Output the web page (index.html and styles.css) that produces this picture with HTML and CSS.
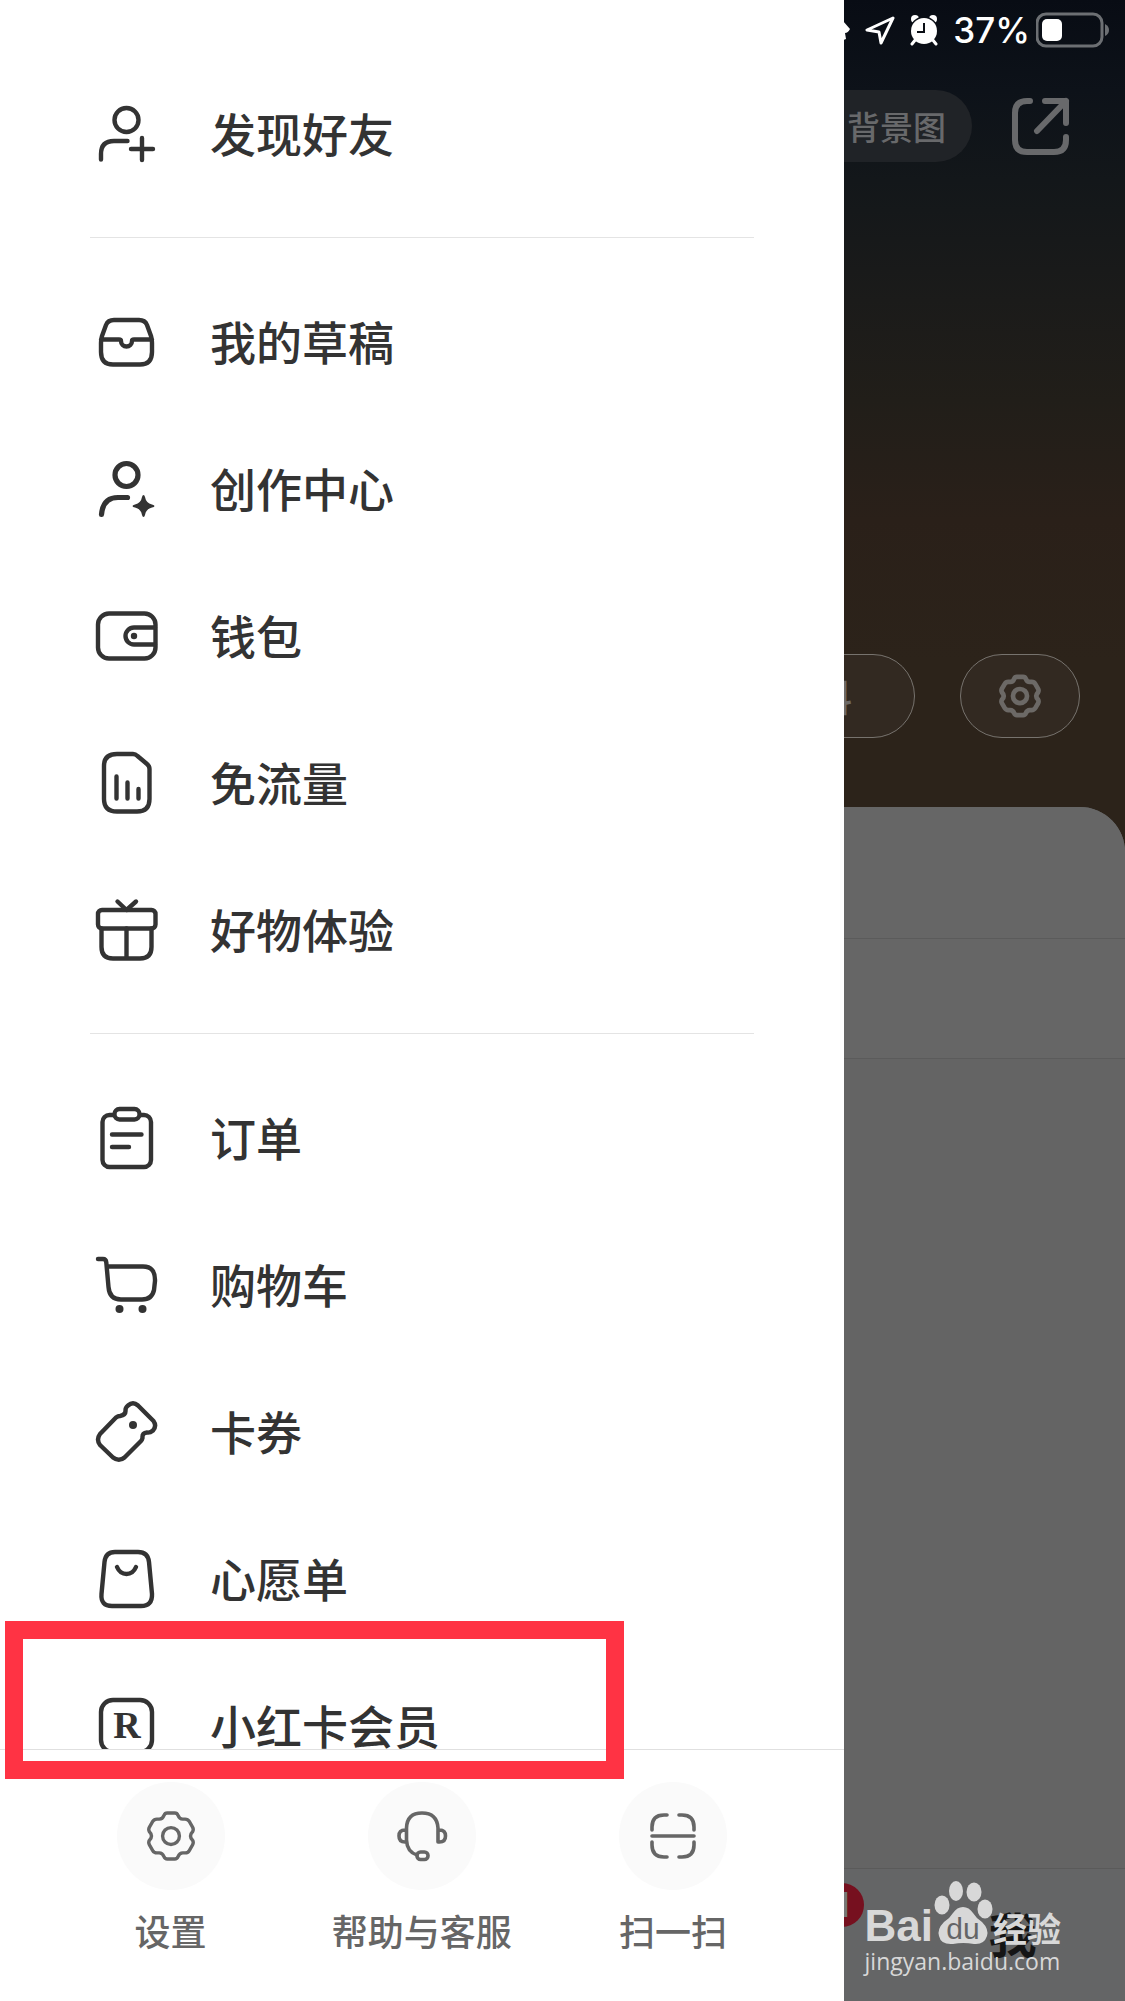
FILE: index.html
```html
<!DOCTYPE html>
<html lang="zh-CN">
<head>
    <meta charset="UTF-8">
    <meta name="viewport" content="width=device-width, initial-scale=1.0">
    <title>我</title>
    <link rel="stylesheet" href="styles.css">
</head>
<body>
    <svg class="defs" width="0" height="0" aria-hidden="true">
        <symbol id="gear" viewBox="-32 -32 64 64">
            <path d="M-4-24.5H4Q6.5-24.5 7.5-22Q9-18 12.5-18H15Q18-18 19.5-15.5L23-9.5Q24.5-7 23-4.5Q18.500 0 23 4.5Q24.5 7 23 9.5L19.5 15.5Q18 18 15 18H12.5Q9 18 7.5 22Q6.5 24.5 4 24.5H-4Q-6.5 24.5-7.5 22Q-9 18-12.5 18H-15Q-18 18-19.5 15.5L-23 9.5Q-24.5 7-23 4.5Q-18.500 0-23-4.5Q-24.5-7-23-9.5L-19.5-15.5Q-18-18-15-18H-12.5Q-9-18-7.5-22Q-6.5-24.5-4-24.5Z"/>
            <circle r="9"/>
        </symbol>
    </svg>

    <!-- 个人主页（被遮罩压暗） -->
    <main class="page">
        <section class="hero">
            <div class="status-bar">
                <svg width="17" height="22" viewBox="0 0 17 22" fill="#fff"><path d="M10 2L17 10Q15 14 12 14L13 20L8 22V2Z"/></svg>
                <svg width="30" height="30" viewBox="0 0 30 30" fill="none" stroke="#fff" stroke-width="3" stroke-linejoin="round"><path d="M28 3L2 15L14 17L16 28Z"/></svg>
                <svg width="28" height="32" viewBox="0 0 28 32">
                    <circle cx="5" cy="5" r="4" fill="#fff"/>
                    <circle cx="23" cy="5" r="4" fill="#fff"/>
                    <circle cx="14" cy="17" r="14.5" fill="#0a0e15"/>
                    <path d="M6 25L2 30M22 25L26 30" stroke="#fff" stroke-width="3" stroke-linecap="round"/>
                    <circle cx="14" cy="17" r="13" fill="#fff"/>
                    <path d="M14 9V18H7" fill="none" stroke="#0a0e15" stroke-width="2"/>
                </svg>
                <span class="battery">
                    37%
                    <svg width="74" height="36" viewBox="0 0 74 36">
                        <rect x="1" y="2" width="65" height="32" rx="9" fill="none" stroke="#6c6f73" stroke-width="3"/>
                        <rect x="6" y="7" width="20" height="22" rx="5" fill="#fff"/>
                        <path d="M69 12Q73 14 73 18Q73 22 69 24Z" fill="#6c6f73"/>
                    </svg>
                </span>
            </div>
            <div class="nav-bar">
                <button class="bg-button">背景图</button>
                <button class="share-button" aria-label="分享">
                    <svg width="60" height="60" viewBox="0 0 60 60"><path d="M20 5H17Q5 5 5 17V44Q5 56 17 56H44Q56 56 56 44V41M35 5H56V27M56 5L27 35"/></svg>
                </button>
            </div>
            <div class="actions">
                <button class="pill">编辑资料</button>
                <button class="pill pill-icon" aria-label="设置"><svg width="50" height="50"><use href="#gear"/></svg></button>
            </div>
        </section>
        <section class="panel">
            <div class="panel-tabs"></div>
            <div class="panel-filter"></div>
        </section>
        <footer class="tab-bar">
            <a class="tab tab-message" href="#" aria-label="消息"><span class="badge">1</span></a>
            <a class="tab tab-me" href="#">我</a>
        </footer>
    </main>

    <!-- 侧边菜单 -->
    <aside class="drawer">
        <nav class="menu">
            <div class="menu-group">
                <a class="menu-item" href="#">
                    <svg class="icon" viewBox="0 0 64 64"><circle cx="32.5" cy="18" r="12"/><path d="M7 57.5V52Q7 39 20 39H33.5M48 36V58M37 47H59"/></svg>
                    <span class="menu-label">发现好友</span>
                </a>
            </div>
            <div class="menu-group">
                <a class="menu-item" href="#">
                    <svg class="icon" viewBox="0 0 64 64"><path d="M20 10H45Q51 10 53 15L57 26Q58 29 58 33V42Q58 54.500 46 54.500H19Q7 54.500 7 42V33Q7 29 8 26L12 15Q14 10 20 10ZM7 29.500H25Q27 29.500 27 31A5.500 5.500 0 0 0 38 31Q38 29.500 40 29.500H58"/></svg>
                    <span class="menu-label">我的草稿</span>
                </a>
                <a class="menu-item" href="#">
                    <svg class="icon icon-bold" viewBox="0 0 64 64"><circle cx="32.500" cy="18" r="11.500"/><path d="M7.500 57.500Q9 40.500 24 40.500H33.500"/><path class="solid" d="M49.500 38Q50.500 38 51 40Q52 46 58 47.500Q60.500 48 60.500 49Q60.500 50 58 50.500Q52 52 51 58Q50.500 60 49.500 60Q48.500 60 48 58Q47 52 41 50.500Q38.500 50 38.500 49Q38.500 48 41 47.500Q47 46 48 40Q48.500 38 49.500 38Z"/></svg>
                    <span class="menu-label">创作中心</span>
                </a>
                <a class="menu-item" href="#">
                    <svg class="icon" viewBox="0 0 64 64"><rect x="4" y="9.500" width="57.500" height="45" rx="11"/><path d="M61 23.500H40A8.500 8.500 0 0 0 40 40.500H61"/><circle class="solid" cx="40" cy="32" r="3.200"/></svg>
                    <span class="menu-label">钱包</span>
                </a>
                <a class="menu-item" href="#">
                    <svg class="icon" viewBox="0 0 64 64"><path d="M23 3H39Q41.500 3 43.500 5L53 13Q55.500 15 55.500 18V48Q55.500 60.500 43 60.500H23Q10 60.500 10 48V15Q10 3 23 3ZM22.500 25.500V47.500M33.500 31.500V47.500M44.500 38V47.500"/></svg>
                    <span class="menu-label">免流量</span>
                </a>
                <a class="menu-item" href="#">
                    <svg class="icon" viewBox="0 0 64 64"><rect x="4" y="12" width="57.500" height="18.500" rx="4"/><path d="M7.500 30.500V49Q7.500 60.500 19 60.500H46Q57.500 60.500 57.500 49V30.500M32.500 30.500V60.500M23.500 3.500L32.500 12L42 3.500"/></svg>
                    <span class="menu-label">好物体验</span>
                </a>
            </div>
            <div class="menu-group">
                <a class="menu-item" href="#">
                    <svg class="icon" viewBox="0 0 64 64"><rect x="8.500" y="9" width="48.500" height="52" rx="7"/><rect class="paper" x="20.500" y="3" width="25" height="10.500" rx="5"/><path d="M18 28.500H47.500M18 41H35"/></svg>
                    <span class="menu-label">订单</span>
                </a>
                <a class="menu-item" href="#">
                    <svg class="icon" viewBox="0 0 64 64"><path d="M4 6H9Q12 6 12.300 9.500L14.500 34Q15.500 46.500 27 46.500H48Q58 46.500 60 37L61 28Q61.500 13.500 49 13.500H13"/><circle class="solid" cx="25.500" cy="56" r="4"/><circle class="solid" cx="48.500" cy="56" r="4"/></svg>
                    <span class="menu-label">购物车</span>
                </a>
                <a class="menu-item" href="#">
                    <svg class="icon" viewBox="0 0 64 64"><path d="M34 5.500Q39 1 44 5.500L59.500 21Q63 26 59 30.500Q56 33 53 32.500Q48 33 48.500 38Q48 40 47 41L30.500 57.500Q25 62 19 57.500L6 45Q2 39.500 6 34L22 17.500Q24 16 26 16Q32 15 31.500 10Q31.500 7.500 34 5.500Z"/><circle class="solid" cx="39" cy="25" r="4"/></svg>
                    <span class="menu-label">卡券</span>
                </a>
                <a class="menu-item" href="#">
                    <svg class="icon" viewBox="0 0 64 64"><path d="M21 5H44Q54 5 55 15L58 47Q58.500 59 47 59H18Q6.500 59 7.500 47L10.500 15Q11.500 5 21 5ZM23 20Q26 27 32.500 27Q39 27 42 20"/></svg>
                    <span class="menu-label">心愿单</span>
                </a>
                <a class="menu-item" href="#">
                    <svg class="icon" viewBox="0 0 64 64"><rect x="7" y="6" width="51" height="52" rx="12"/><text class="icon-letter" x="33" y="44" text-anchor="middle">R</text></svg>
                    <span class="menu-label">小红卡会员</span>
                </a>
            </div>
        </nav>
        <div class="drawer-footer">
            <button class="tool">
                <span class="tool-icon"><svg width="60" height="60"><use href="#gear"/></svg></span>
                设置
            </button>
            <button class="tool">
                <span class="tool-icon"><svg width="60" height="60" viewBox="-30 -30 60 60"><path d="M16 6V-8Q15-23 0-23Q-15-23-15.500-8V4Q-15 16-5 19M-15.500-6H-17Q-23-6-23 0Q-23 6-17 6H-15.500M16-6H17.500Q23.500-6 23.500 0Q23.500 6 17.500 6H16"/><rect x="-5" y="16" width="11" height="7.500" rx="3.500"/></svg></span>
                帮助与客服
            </button>
            <button class="tool">
                <span class="tool-icon"><svg width="60" height="60" viewBox="-30 -30 60 60"><path d="M-6-21H-9Q-21-21-21-9V-6M6-21H9Q21-21 21-9V-6M-6 21H-9Q-21 21-21 9V6M6 21H9Q21 21 21 9V6M-21 0H21"/></svg></span>
                扫一扫
            </button>
        </div>
        <div class="highlight"></div>
    </aside>

    <div class="watermark">
        <div class="watermark-logo">
            <span>Bai</span>
            <svg width="60" height="64" viewBox="0 0 60 64">
                <ellipse cx="9" cy="24" rx="7.500" ry="9.500"/>
                <ellipse cx="23" cy="10" rx="7" ry="10"/>
                <ellipse cx="41" cy="11" rx="7.500" ry="9.500"/>
                <ellipse cx="52" cy="28" rx="7.500" ry="9.500"/>
                <path d="M30 26Q36 26 40 32Q43 37 49 41Q56 48 54 55Q51 64 41 63Q30 61 20 63Q8 64 6 55Q4 48 11 41Q17 37 20 32Q24 26 30 26Z"/>
                <text class="watermark-du" x="30" y="58" text-anchor="middle">du</text>
            </svg>
            <span class="watermark-cn">经验</span>
        </div>
        <div class="watermark-url">jingyan.baidu.com</div>
    </div>
</body>
</html>
```
FILE: styles.css
```css
* {
    box-sizing: border-box;
}

body {
    position: relative;
    margin: 0;
    font-family: "Noto Sans CJK SC", sans-serif;
    font-weight: 500;
    color: #333;
    background-color: #2c231a;
}

a {
    color: inherit;
    text-decoration: none;
}

button {
    padding: 0;
    border: none;
    background: none;
    font: inherit;
    color: inherit;
    cursor: pointer;
}

svg {
    display: block;
    flex-shrink: 0;
}

.defs {
    position: absolute;
}

/* 主页 */
.page {
    display: flex;
    flex-direction: column;
    min-height: 100vh;
    background: linear-gradient(#080c14 0, #0d1219 90px, #13171a 180px, #1b1b1a 300px, #211e19 400px, #2a2019 520px, #2c231a 660px);
}

.hero {
    display: flex;
    flex-direction: column;
    min-height: 807px;
}

.status-bar {
    display: flex;
    align-items: center;
    justify-content: flex-end;
    gap: 15px;
    height: 60px;
    padding-right: 15px;
}

.battery {
    display: flex;
    align-items: center;
    gap: 6px;
    font-family: Inter, sans-serif;
    font-size: 35px;
    line-height: 60px;
    color: #fff;
}

.nav-bar {
    display: flex;
    align-items: center;
    justify-content: flex-end;
    gap: 38px;
    margin-top: 30px;
    padding-right: 55px;
    color: #68696b;
}

.bg-button {
    width: 260px;
    height: 72px;
    padding-right: 26px;
    border-radius: 36px;
    background-color: #202327;
    font-size: 33px;
    text-align: right;
}

.share-button svg {
    fill: none;
    stroke: currentColor;
    stroke-width: 6;
    stroke-linecap: round;
    stroke-linejoin: round;
}

.actions {
    display: flex;
    justify-content: flex-end;
    gap: 45px;
    margin-top: auto;
    padding: 0 45px 69px;
}

.pill {
    height: 84px;
    padding: 0 62px;
    border: 1px solid #77736e;
    border-radius: 42px;
    background-color: #322921;
    font-size: 36px;
    color: #6c6966;
}

.pill-icon {
    display: flex;
    align-items: center;
    justify-content: center;
    width: 120px;
    padding: 0;
}

.pill-icon svg {
    fill: none;
    stroke: currentColor;
    stroke-width: 6;
}

.panel {
    flex: 1;
    border-top-right-radius: 45px;
    background-color: #646464;
    overflow: hidden;
}

.panel-tabs,
.panel-filter {
    height: 132px;
    border-bottom: 1px solid #5b5b5b;
    background-color: #666;
}

.panel-filter {
    height: 120px;
}

.tab-bar {
    display: grid;
    grid-template-columns: repeat(5, 1fr);
    height: 133px;
    border-top: 1px solid #5a5a5a;
    background-color: #646566;
}

.tab {
    position: relative;
    font-size: 48px;
    font-weight: 700;
    line-height: 126px;
    text-align: center;
    color: #151515;
}

.tab-message {
    grid-column: 4;
}

.badge {
    position: absolute;
    top: 14px;
    right: 36px;
    width: 44px;
    height: 44px;
    border-radius: 22px;
    background-color: #76101f;
    font-family: Inter, sans-serif;
    font-size: 34px;
    line-height: 44px;
    color: #777;
}

/* 侧边菜单 */
.drawer {
    position: absolute;
    top: 0;
    bottom: 0;
    left: 0;
    display: flex;
    flex-direction: column;
    width: 75%;
    background-color: #fff;
}

.menu {
    flex: 1;
    min-height: 0;
    padding: 30px 90px 0;
    overflow: hidden;
}

.menu-group {
    padding: 30px 0;
}

.menu-group + .menu-group {
    border-top: 1px solid #e4e4e4;
}

.menu-item {
    display: flex;
    align-items: center;
    gap: 52px;
    height: 147px;
    padding-left: 4px;
}

.menu-label {
    padding-bottom: 4px;
    font-size: 46px;
    line-height: 60px;
}

.icon {
    width: 64px;
    height: 64px;
    fill: none;
    stroke: #333;
    stroke-width: 4.4;
    stroke-linecap: round;
    stroke-linejoin: round;
}

.icon-bold {
    stroke-width: 5.2;
}

.icon .solid {
    fill: #333;
    stroke: none;
}

.icon .paper {
    fill: #fff;
}

.icon-letter {
    fill: #333;
    stroke: none;
    font-family: "Liberation Serif", serif;
    font-size: 38px;
    font-weight: 700;
}

.drawer-footer {
    display: grid;
    grid-template-columns: repeat(3, 1fr);
    align-items: start;
    height: 252px;
    padding: 32px 45px 0;
    border-top: 1px solid #e0e0e0;
}

.tool {
    display: flex;
    flex-direction: column;
    align-items: center;
    gap: 14px;
    font-size: 36px;
    color: #666;
}

.tool-icon {
    display: flex;
    align-items: center;
    justify-content: center;
    width: 108px;
    height: 108px;
    border-radius: 50%;
    background-color: #fafafa;
}

.tool-icon svg {
    fill: none;
    stroke: #666;
    stroke-width: 3.6;
    stroke-linecap: round;
    stroke-linejoin: round;
}

.highlight {
    position: absolute;
    bottom: 222px;
    left: 5px;
    width: 619px;
    height: 158px;
    border: 18px solid #ff3344;
}

/* 水印 */
.watermark {
    position: absolute;
    right: 64px;
    bottom: 24px;
    color: #d8d8d8;
}

.watermark-logo {
    display: flex;
    align-items: flex-end;
    font-family: "Liberation Sans", sans-serif;
    font-size: 44px;
    font-weight: 700;
    line-height: 38px;
}

.watermark-logo svg {
    fill: #d8d8d8;
}

.watermark-logo .watermark-du {
    fill: #646566;
    font-family: "Liberation Sans", sans-serif;
    font-size: 30px;
    font-weight: 400;
}

.watermark-cn {
    font-family: "Noto Sans CJK SC", sans-serif;
    font-size: 34px;
    line-height: 34px;
}

.watermark-url {
    font-family: "Open Sans", sans-serif;
    font-size: 23px;
    font-weight: 400;
    line-height: 32px;
}
```
